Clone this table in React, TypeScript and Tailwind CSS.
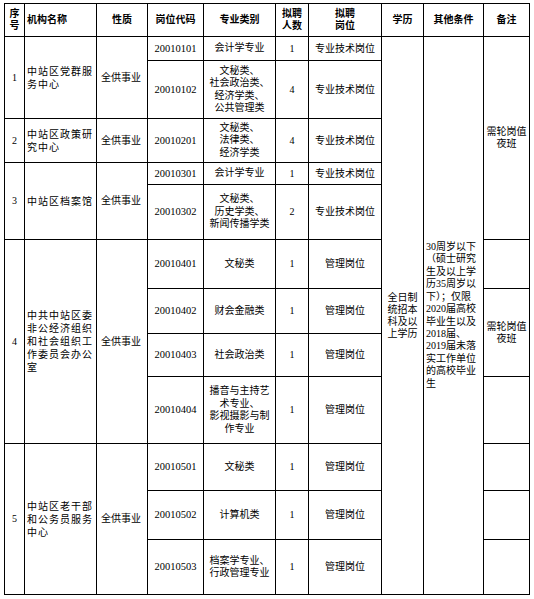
import React from "react";

const RS: Record<number, string> = {
  1: "row-start-1", 2: "row-start-2", 3: "row-start-3", 4: "row-start-4", 5: "row-start-5",
  6: "row-start-6", 7: "row-start-7", 8: "row-start-8", 9: "row-start-9", 10: "row-start-10",
  11: "row-start-11", 12: "row-start-12", 13: "row-start-13",
};
const SP: Record<number, string> = {
  1: "row-span-1", 2: "row-span-2", 3: "row-span-3", 4: "row-span-4", 5: "row-span-5", 12: "row-span-12",
};
const CS: Record<number, string> = {
  1: "col-start-1", 2: "col-start-2", 3: "col-start-3", 4: "col-start-4", 5: "col-start-5",
  6: "col-start-6", 7: "col-start-7", 8: "col-start-8", 9: "col-start-9", 10: "col-start-10",
};

type CellProps = {
  r: number;
  c: number;
  span?: number;
  lines?: string[];
  className?: string;
};

function Cell({ r, c, span = 1, lines = [], className = "" }: CellProps) {
  return (
    <div className={`bg-white flex items-center ${RS[r]} ${SP[span]} ${CS[c]} ${className}`}>
      <div>
        {lines.map((l, i) => (
          <div key={i}>{l}</div>
        ))}
      </div>
    </div>
  );
}

type Sub = { code: string; spec: string[]; count: string; post: string };
type Group = { no: string; name: string[]; start: number; subs: Sub[] };

const groups: Group[] = [
  {
    no: "1",
    name: ["中站区党群服", "务中心"],
    start: 2,
    subs: [
      { code: "20010101", spec: ["会计学专业"], count: "1", post: "专业技术岗位" },
      { code: "20010102", spec: ["文秘类、", "社会政治类、", "经济学类、", "公共管理类"], count: "4", post: "专业技术岗位" },
    ],
  },
  {
    no: "2",
    name: ["中站区政策研", "究中心"],
    start: 4,
    subs: [{ code: "20010201", spec: ["文秘类、", "法律类、", "经济学类"], count: "4", post: "专业技术岗位" }],
  },
  {
    no: "3",
    name: ["中站区档案馆"],
    start: 5,
    subs: [
      { code: "20010301", spec: ["会计学专业"], count: "1", post: "专业技术岗位" },
      { code: "20010302", spec: ["文秘类、", "历史学类、", "新闻传播学类"], count: "2", post: "专业技术岗位" },
    ],
  },
  {
    no: "4",
    name: ["中共中站区委", "非公经济组织", "和社会组织工", "作委员会办公", "室"],
    start: 7,
    subs: [
      { code: "20010401", spec: ["文秘类"], count: "1", post: "管理岗位" },
      { code: "20010402", spec: ["财会金融类"], count: "1", post: "管理岗位" },
      { code: "20010403", spec: ["社会政治类"], count: "1", post: "管理岗位" },
      { code: "20010404", spec: ["播音与主持艺", "术专业、", "影视摄影与制", "作专业"], count: "1", post: "管理岗位" },
    ],
  },
  {
    no: "5",
    name: ["中站区老干部", "和公务员服务", "中心"],
    start: 11,
    subs: [
      { code: "20010501", spec: ["文秘类"], count: "1", post: "管理岗位" },
      { code: "20010502", spec: ["计算机类"], count: "1", post: "管理岗位" },
      { code: "20010503", spec: ["档案学专业、", "行政管理专业"], count: "1", post: "管理岗位" },
    ],
  },
];

const other = [
  "30周岁以下",
  "（硕士研究",
  "生及以上学",
  "历35周岁以",
  "下）；仅限",
  "2020届高校",
  "毕业生以及",
  "2018届、",
  "2019届未落",
  "实工作单位",
  "的高校毕业",
  "生",
];

export default function App() {
  const C = "justify-center text-center";
  return (
    <div className="bg-white min-h-[599px] pl-[4px] pt-[3px] text-black font-['Liberation_Serif','Noto_Sans_CJK_SC',serif] text-[10px] leading-[12px]">
      <div className="grid w-fit bg-black gap-px p-px grid-cols-[19px_71px_50px_55px_71px_32px_72px_41px_59px_45px] grid-rows-[32px_23px_57px_43px_21px_54px_48px_44px_42px_66px_46px_48px_54px]">
        {/* header */}
        <Cell r={1} c={1} lines={["序", "号"]} className={`${C} font-bold`} />
        <Cell r={1} c={2} lines={["机构名称"]} className="justify-start pl-[2px] font-bold" />
        <Cell r={1} c={3} lines={["性质"]} className={`${C} font-bold`} />
        <Cell r={1} c={4} lines={["岗位代码"]} className={`${C} font-bold`} />
        <Cell r={1} c={5} lines={["专业类别"]} className={`${C} font-bold`} />
        <Cell r={1} c={6} lines={["拟聘", "人数"]} className={`${C} font-bold`} />
        <Cell r={1} c={7} lines={["拟聘", "岗位"]} className={`${C} font-bold`} />
        <Cell r={1} c={8} lines={["学历"]} className={`${C} font-bold`} />
        <Cell r={1} c={9} lines={["其他条件"]} className={`${C} font-bold`} />
        <Cell r={1} c={10} lines={["备注"]} className={`${C} font-bold`} />

        {groups.map((g) => (
          <React.Fragment key={g.no}>
            <Cell r={g.start} span={g.subs.length} c={1} lines={[g.no]} className={C} />
            <Cell
              r={g.start}
              span={g.subs.length}
              c={2}
              lines={g.name}
              className="justify-start pl-[2px] tracking-[1px] leading-[13px]"
            />
            <Cell r={g.start} span={g.subs.length} c={3} lines={["全供事业"]} className="justify-start pl-[4px]" />
            {g.subs.map((s, i) => (
              <React.Fragment key={s.code}>
                <Cell r={g.start + i} c={4} lines={[s.code]} className={`${C} text-[10.5px]`} />
                <Cell r={g.start + i} c={5} lines={s.spec} className={`${C} leading-[12.5px]`} />
                <Cell r={g.start + i} c={6} lines={[s.count]} className={C} />
                <Cell r={g.start + i} c={7} lines={[s.post]} className={C} />
              </React.Fragment>
            ))}
          </React.Fragment>
        ))}

        <Cell r={2} span={12} c={8} lines={["全日制", "统招本", "科及以", "上学历"]} className={C} />
        <Cell r={2} span={12} c={9} lines={other} className="justify-start pl-[2px] leading-[12.4px]" />

        <Cell r={2} span={5} c={10} lines={["需轮岗值", "夜班"]} className={C} />
        <Cell r={7} c={10} />
        <Cell r={8} span={2} c={10} lines={["需轮岗值", "夜班"]} className={C} />
        <Cell r={10} c={10} />
        <Cell r={11} c={10} />
        <Cell r={12} c={10} />
        <Cell r={13} c={10} />
      </div>
    </div>
  );
}
